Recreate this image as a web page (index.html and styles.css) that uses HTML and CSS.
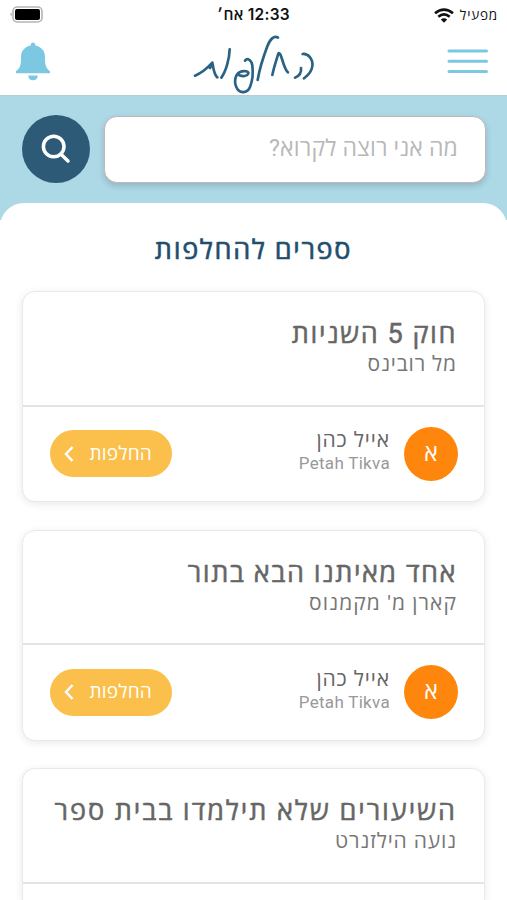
FILE: index.html
```html
<!DOCTYPE html>
<html lang="he" dir="rtl">
<head>
<meta charset="utf-8">
<meta name="viewport" content="width=device-width, initial-scale=1">
<title>החלפות</title>
<link rel="stylesheet" href="styles.css">
</head>
<body>
<div class="status">
  <div class="carrier"><span class="carrier-name">מפעיל</span>
    <svg class="wifi" viewBox="0 0 20 15" fill="none" stroke="#111" stroke-width="2.7"><path d="M1 5.2Q10-2 19 5.2M4.3 8.8Q10 4 15.7 8.8"/><path d="M6.8 11.5Q10 8.8 13.2 11.5L10 14.7Z" fill="#111" stroke="none"/></svg>
  </div>
  <div class="clock"><span>12:33</span> <span>אח׳</span></div>
  <svg class="battery" viewBox="0 0 34 18"><path d="M2.6 6.2Q0 8 2.6 10.4Z" fill="#aaa"/><rect x="4" y="1" width="29" height="15" rx="4.2" fill="#fff" stroke="#b5b5b5" stroke-width="1.6"/><rect x="6" y="3" width="25" height="11" rx="2" fill="#000"/></svg>
</div>
<header class="topbar">
  <svg class="menu" viewBox="0 0 42 26" stroke="#7cc7e2" stroke-width="3" stroke-linecap="round"><path d="M2 3H39.500M2 13.200H39.500M2 23.400H39.500"/></svg>
  <svg class="logo" viewBox="60 100 380 190" role="img" aria-label="החלפות" fill="none" stroke="#2a6283" stroke-width="8" stroke-linecap="round" stroke-linejoin="round">
    <path d="M398 163C414 161 430 178 427 200C424 220 412 228 402 236M393 205C395 220 388 229 375 234"/>
    <path d="M307 226C312 202 318 185 325 162C328 157 332 165 336 178C342 198 347 214 354 218"/>
    <path d="M324 114C312 107 300 118 292 140C280 172 268 210 263 241"/>
    <path d="M225 183C232 174 245 180 247 198C250 222 246 247 240 262C232 281 212 282 202 268C190 249 195 224 210 217C222 211 238 216 235 222C232 230 218 231 208 227"/>
    <path d="M179 149C178 178 168 215 154 234"/>
    <path d="M75 228C100 218 115 202 127 189C130 207 132 226 142 233M127 189L120 205"/>
  </svg>
  <svg class="bell" viewBox="0 0 36 40" fill="#7cc7e2"><path d="M18 .5C19.500.500 20.400 1.600 20.300 3.500C26.500 4.800 30 9 30 15C30 23 30.500 25.500 35 29.300V31.200H1V29.300C5.500 25.500 6 23 6 15C6 9 9.500 4.800 15.700 3.500C15.600 1.600 16.500.500 18 .500ZM13.200 33.400H22.800C22.500 36.800 20.700 38.300 18 38.300S13.500 36.800 13.200 33.400Z"/></svg>
</header>
<section class="search">
  <div class="field"><span class="placeholder">מה אני רוצה לקרוא?</span></div>
  <div class="search-button"><svg class="lens" viewBox="0 0 30 30" fill="none" stroke="#fff" stroke-width="3.500" stroke-linecap="round"><circle cx="12.700" cy="12.500" r="10.300"/><path d="M20 20.200L27 27"/></svg></div>
</section>
<main class="sheet">
  <h1 class="heading"><span>ספרים להחלפות</span></h1>
  <article class="card">
    <div class="book"><h2 class="title">חוק 5 השניות</h2><p class="author">מל רובינס</p></div>
    <div class="owner">
      <div class="avatar">א</div>
      <div class="person"><div class="name">אייל כהן</div><div class="city">Petah Tikva</div></div>
      <div class="swap"><span class="swap-text">החלפות</span><svg class="chevron" viewBox="0 0 10 16" fill="none" stroke="#fff" stroke-width="2.500"><path d="M8.500 1L2 8L8.500 15"/></svg></div>
    </div>
  </article>
  <article class="card">
    <div class="book"><h2 class="title">אחד מאיתנו הבא בתור</h2><p class="author author-wide">קארן מ' מקמנוס</p></div>
    <div class="owner">
      <div class="avatar">א</div>
      <div class="person"><div class="name">אייל כהן</div><div class="city">Petah Tikva</div></div>
      <div class="swap"><span class="swap-text">החלפות</span><svg class="chevron" viewBox="0 0 10 16" fill="none" stroke="#fff" stroke-width="2.500"><path d="M8.500 1L2 8L8.500 15"/></svg></div>
    </div>
  </article>
  <article class="card card-last">
    <div class="book"><h2 class="title title-wide">השיעורים שלא תילמדו בבית ספר</h2><p class="author">נועה הילזנרט</p></div>
  </article>
</main>
</body>
</html>
```

FILE: styles.css
```css
* { box-sizing: border-box; margin: 0; padding: 0; }
html, body { height: 900px; overflow: hidden; }
body { width: 507px; background: #fff; font-family: Roboto, "Open Sans", sans-serif; color: #666; }
svg { display: block; flex: none; }
span, h2, p { white-space: nowrap; }

.status { height: 30px; padding: 0 9px; display: grid; grid-template-columns: 1fr auto 1fr; align-items: center; color: #111; }
.carrier { display: flex; align-items: center; gap: 6px; font: 13.500px/20px "Open Sans", sans-serif; }
.carrier-name { letter-spacing: .8px; }
.wifi { width: 20px; height: 15px; }
.clock { font: 600 15.500px/20px Inter, "Open Sans", sans-serif; letter-spacing: .25px; }
.battery { width: 34px; height: 18px; justify-self: end; }

.topbar { height: 65px; padding: 3px 18px 0 15px; display: grid; grid-template-columns: 42px 126.700px 36px; justify-content: space-between; align-items: start; }
.menu { width: 42px; height: 26px; margin-top: 15px; }
.logo { width: 126.700px; height: 63.300px; margin-right: -4px; }
.bell { width: 36px; height: 40px; margin-top: 9px; }

.search { height: 125px; padding: 20px 21px 0 22px; background: #add8e6; border-top: 1px solid #b9cdd3; display: flex; gap: 14px; }
.field { flex: 1; height: 67px; padding: 0 27px; background: #fff; border: 1px solid #c0b8b8; border-radius: 13px; box-shadow: 0 3px 6px rgba(0,0,0,.16); color: #b8b8b8; font-size: 23px; line-height: 63px; letter-spacing: .17px; }
.search-button { width: 68px; height: 68px; margin-top: -1px; border-radius: 50%; background: #2c5a77; display: grid; place-items: center; }
.lens { width: 30px; height: 30px; }

.sheet { height: 697px; overflow: hidden; margin-top: -17px; background: #fff; border-radius: 24px 24px 0 0; padding: 0 22px; }
.heading { height: 88px; text-align: center; font-size: 27px; font-weight: 400; line-height: 94px; letter-spacing: 1.650px; -webkit-text-stroke: .6px; color: #1f4e6e; }
.card { height: 211px; margin-bottom: 27.500px; border: 1px solid #e9e9e9; border-radius: 13px; box-shadow: 0 2px 9px rgba(0,0,0,.09); background: #fff; }
.card-last { height: 132px; margin-bottom: 0; border-bottom: 0; border-radius: 13px 13px 0 0; }
.book { height: 114.500px; padding: 24px 27px 0; border-bottom: 2px solid #e4e4e4; }
.title { font-size: 27px; font-weight: 400; line-height: 36px; letter-spacing: 1.550px; -webkit-text-stroke: .5px; }
.title-wide { letter-spacing: 1.930px; }
.author { font-size: 21px; line-height: 25px; letter-spacing: .850px; color: #777; }
.author-wide { letter-spacing: 1.050px; }
.owner { height: 94px; padding: 0 26px 0 27px; display: flex; align-items: center; }
.avatar { width: 54px; height: 54px; border-radius: 50%; background: #ff860d; color: #fff; font-size: 23px; line-height: 53px; text-align: center; }
.person { margin-right: 14px; flex: 1; margin-top: -5px; }
.name { font-size: 21px; line-height: 24px; letter-spacing: .900px; }
.city { font-size: 17px; line-height: 22px; letter-spacing: .300px; color: #999; }
.swap { width: 122px; height: 47px; padding: 0 20px 0 14px; border-radius: 24px; background: #fbbf4b; color: #fff; display: flex; align-items: center; justify-content: space-between; font-size: 19px; }
.swap-text { line-height: 44px; letter-spacing: .2px; }
.chevron { width: 10px; height: 16px; }
```
